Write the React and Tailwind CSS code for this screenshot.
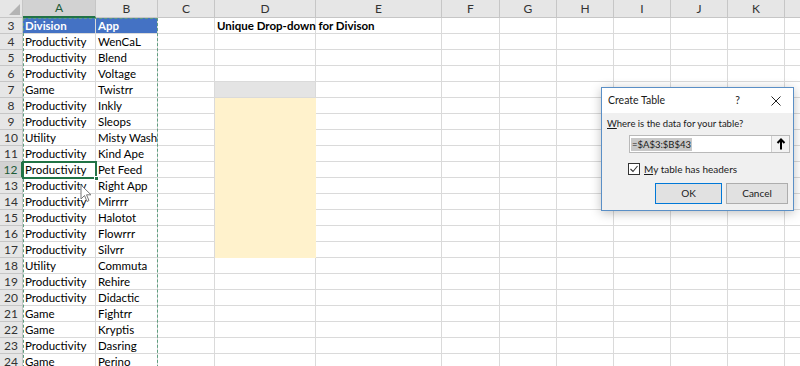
import { useState } from 'react'

const cols = [
    { key: 'A', w: 73 },
    { key: 'B', w: 62 },
    { key: 'C', w: 57 },
    { key: 'D', w: 101 },
    { key: 'E', w: 126 },
    { key: 'F', w: 58 },
    { key: 'G', w: 57 },
    { key: 'H', w: 57 },
    { key: 'I', w: 57 },
    { key: 'J', w: 57 },
    { key: 'K', w: 57 },
    { key: 'L', w: 57 },
]

const data = [
    ['Productivity', 'WenCaL'],
    ['Productivity', 'Blend'],
    ['Productivity', 'Voltage'],
    ['Game', 'Twistrr'],
    ['Productivity', 'Inkly'],
    ['Productivity', 'Sleops'],
    ['Utility', 'Misty Wash'],
    ['Productivity', 'Kind Ape'],
    ['Productivity', 'Pet Feed'],
    ['Productivity', 'Right App'],
    ['Productivity', 'Mirrrr'],
    ['Productivity', 'Halotot'],
    ['Productivity', 'Flowrrr'],
    ['Productivity', 'Silvrr'],
    ['Utility', 'Commuta'],
    ['Productivity', 'Rehire'],
    ['Productivity', 'Didactic'],
    ['Game', 'Fightrr'],
    ['Game', 'Kryptis'],
    ['Productivity', 'Dasring'],
    ['Game', 'Perino'],
]

function Cell({ w, className = '', children }) {
    return (
        <div
            className={`h-4 shrink-0 border-r border-b border-[#dadada] px-[2px] text-[11.5px] leading-[15px] whitespace-nowrap overflow-visible ${className}`}
            style={{ width: w }}
        >
            {children}
        </div>
    )
}

function Dialog() {
    const [checked] = useState(true)
    return (
        <div className="absolute left-[601px] top-[87px] w-[193px] h-[124px] border border-[#5a8fc6] bg-[#f0f0f0] shadow-[0_2px_10px_rgba(0,0,0,0.25)] font-['Lato',sans-serif] text-[9.5px] text-[#1a1a1a]">
            <div className="h-[25px] bg-white flex items-center pl-[6px] pr-[12px]">
                <span className="text-[10.5px] flex-1">Create Table</span>
                <span className="text-[10.5px] mr-[31px]">?</span>
                <svg width="10" height="10" viewBox="0 0 10 10">
                    <path d="M0.5 0.5 L9.5 9.5 M9.5 0.5 L0.5 9.5" stroke="#222" strokeWidth="1" />
                </svg>
            </div>
            <div className="pl-[5px] pt-[3px] leading-[16px]">
                <span className="underline">W</span>here is the data for your table?
            </div>
            <div className="ml-[27px] mt-[3px] w-[161px] h-[18px] bg-white border border-[#b9b9b9] flex items-center">
                <span className="ml-[1px] bg-[#c8c8c8] px-[1px] leading-[13px] text-[9.5px]">=$A$3:$B$43</span>
                <div className="ml-auto h-full w-[18px] border-l border-[#cfcfcf] bg-[#f3f3f3] flex items-center justify-center">
                    <svg width="10" height="12" viewBox="0 0 10 12">
                        <path d="M5 1.5 L5 11.5 M1.5 5 L5 1.5 L8.5 5" stroke="#000" strokeWidth="2" fill="none" />
                    </svg>
                </div>
            </div>
            <div className="ml-[26px] mt-[10px] h-[12px] flex items-center gap-[4px]">
                <div className="w-[12px] h-[12px] border border-[#333] bg-white flex items-center justify-center">
                    {checked && (
                        <svg width="10" height="10" viewBox="0 0 10 10">
                            <path d="M1.5 5 L4 7.5 L8.5 2" stroke="#333" strokeWidth="1.1" fill="none" />
                        </svg>
                    )}
                </div>
                <span className="text-[10px]"><span className="underline">M</span>y table has headers</span>
            </div>
            <div className="flex justify-end gap-[4px] mt-[8px] pr-[5px]">
                <div className="w-[67px] h-[21px] border border-[#0078d7] bg-[#e1e1e1] flex items-center justify-center text-[10px]">OK</div>
                <div className="w-[62px] h-[21px] border border-[#adadad] bg-[#e1e1e1] flex items-center justify-center text-[10px]">Cancel</div>
            </div>
        </div>
    )
}

export default function App() {
    return (
        <div className="relative w-[800px] h-[366px] overflow-hidden bg-white font-['Lato',sans-serif] text-black">
            {/* column headers */}
            <div className="flex h-[18px]">
                <div className="w-[23px] shrink-0 bg-[#e6e6e6] border-r border-b border-[#c6c6c6] relative">
                    <svg className="absolute right-[2px] bottom-[2px]" width="11" height="11" viewBox="0 0 11 11">
                        <path d="M11 0 L11 11 L0 11 Z" fill="#b4b4b4" />
                    </svg>
                </div>
                {cols.map(c => (
                    <div
                        key={c.key}
                        className={`shrink-0 flex items-center justify-center text-[12px] border-r border-[#c6c6c6] ${c.key === 'A' ? 'bg-[#d2d2d2] border-b-2 border-b-[#217346] text-[#1e5c38]' : 'bg-[#e6e6e6] border-b text-[#333]'}`}
                        style={{ width: c.w }}
                    >
                        {c.key}
                    </div>
                ))}
            </div>

            {/* rows */}
            <div>
                {/* row 3 */}
                <div className="flex">
                    <div className="w-[23px] shrink-0 h-4 bg-[#e6e6e6] border-r border-b border-[#c6c6c6] text-[12px] leading-[15px] text-center text-[#333]">3</div>
                    <Cell w={73} className="bg-[#4472c4] text-white font-bold border-[#4472c4]">Division</Cell>
                    <Cell w={62} className="bg-[#4472c4] text-white font-bold border-[#4472c4]">App</Cell>
                    <Cell w={57} />
                    <Cell w={101} className="font-bold relative z-10">Unique Drop-down for Divison</Cell>
                    <Cell w={126} />
                    {cols.slice(5).map(c => <Cell key={c.key} w={c.w} />)}
                </div>
                {data.map((r, i) => {
                    const n = i + 4
                    const d = n === 7 ? 'bg-[#e4e4e4]' : n >= 8 && n <= 17 ? 'bg-[#fff2cc] border-[#fff2cc]' : ''
                    return (
                        <div key={n} className="flex">
                            <div className={`w-[23px] shrink-0 h-4 border-r border-b border-[#c6c6c6] text-[12px] leading-[15px] text-center ${n === 12 ? 'bg-[#d2d2d2] border-r-2 border-r-[#217346] text-[#1e5c38]' : 'bg-[#e6e6e6] text-[#333]'}`}>{n}</div>
                            <Cell w={73}>{r[0]}</Cell>
                            <Cell w={62}>{r[1]}</Cell>
                            <Cell w={57} />
                            <Cell w={101} className={d} />
                            {cols.slice(4).map(c => <Cell key={c.key} w={c.w} />)}
                        </div>
                    )
                })}
            </div>

            {/* copy marquee around A:B */}
            <div className="absolute left-[23px] top-[18px] w-[135px] h-[360px] border border-dashed border-[#5f9f80] pointer-events-none" />

            {/* active cell A12 */}
            <div className="absolute left-[22px] top-[161px] w-[75px] h-[18px] border-2 border-[#217346] pointer-events-none">
                <div className="absolute -right-[4px] -bottom-[4px] w-[5px] h-[5px] bg-[#217346] border border-white" />
            </div>

            {/* mouse pointer */}
            <svg className="absolute left-[80px] top-[184px]" width="12" height="19" viewBox="0 0 12 19">
                <path d="M1 1 L1 15 L4.5 11.5 L7 17.5 L9 16.5 L6.5 10.8 L11 10.8 Z" fill="#fff" stroke="#777" strokeWidth="1" strokeLinejoin="round" />
            </svg>

            <Dialog />
        </div>
    )
}
